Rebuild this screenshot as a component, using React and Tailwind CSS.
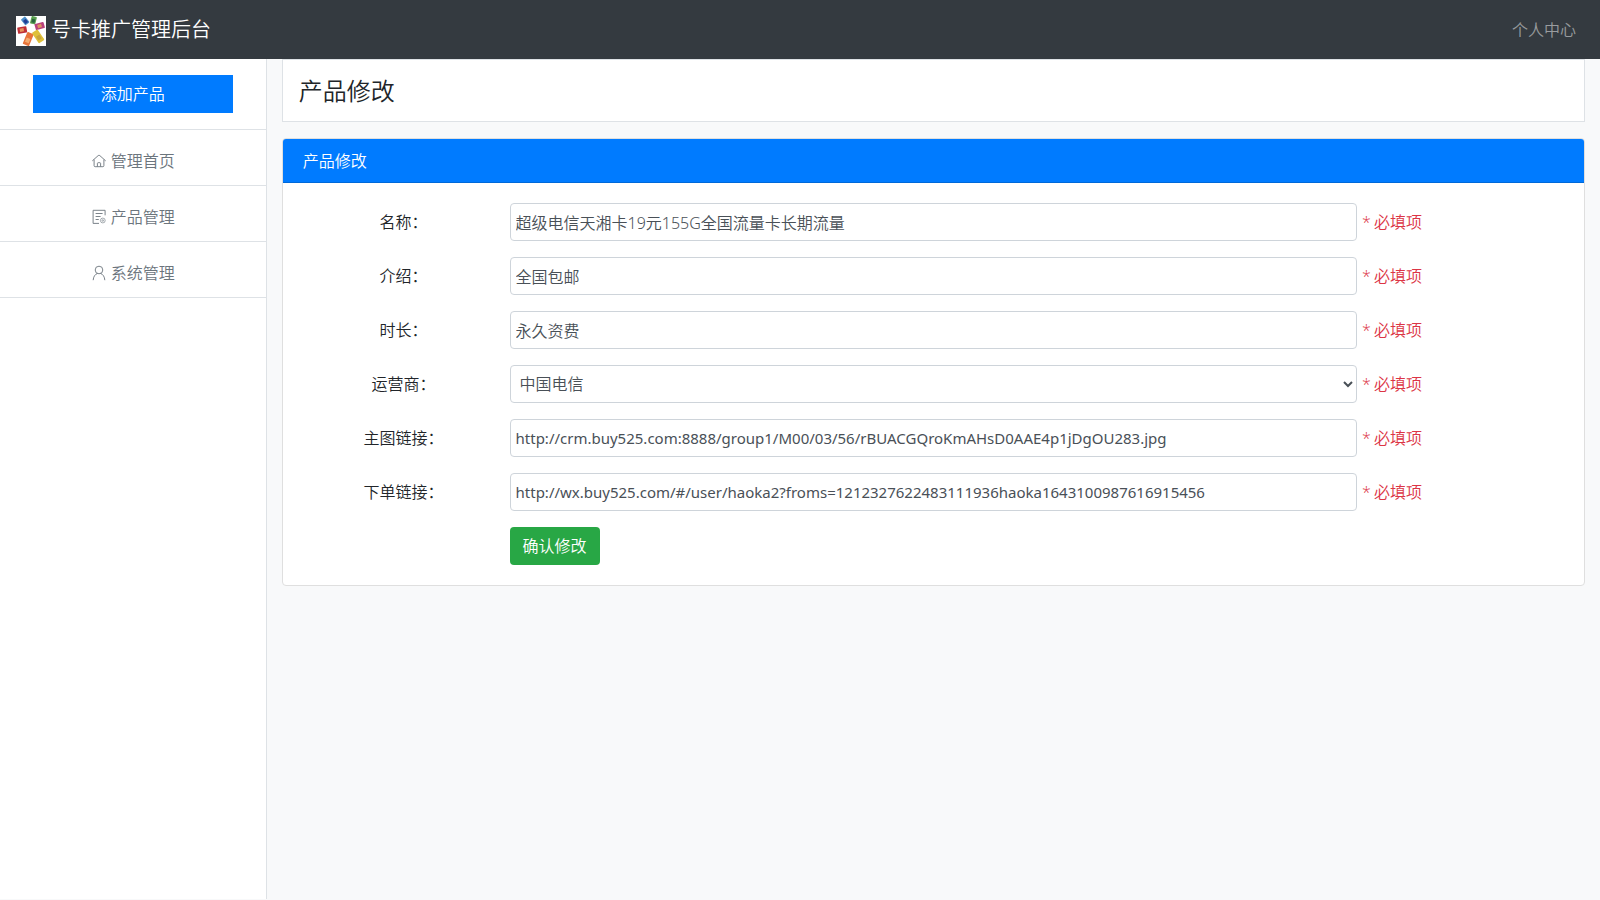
function Logo() {
  return (
    <svg className="size-[30px] bg-white" viewBox="0 0 30 30" aria-hidden="true">
      <g transform="rotate(-38 9.5 5)"><rect x="6.6" y="1" width="5.4" height="7.4" rx="0.8" fill="#4c8fc8" /><rect x="7.6" y="3.4" width="3.4" height="4" fill="#233f96" /></g>
      <g transform="rotate(14 17.5 4)"><rect x="14.8" y="0.4" width="5.4" height="7.6" rx="0.8" fill="#5aa050" /><rect x="15.9" y="3" width="3.2" height="3.6" fill="#2c6440" /></g>
      <g transform="rotate(-16 24 10)"><rect x="19" y="6.8" width="9.4" height="6.2" rx="0.8" fill="#b8407c" /><rect x="21.6" y="8.2" width="4" height="3.4" fill="#dd9360" /></g>
      <g transform="rotate(-10 6 14)"><rect x="1.6" y="10.8" width="9.2" height="6.4" rx="0.8" fill="#bf3038" /><rect x="3.8" y="12.3" width="4" height="3.4" fill="#e6925a" /></g>
      <g transform="rotate(22 12 23)"><rect x="8.8" y="16.4" width="6.8" height="13" rx="0.8" fill="#e8743a" /><rect x="10.2" y="22" width="4" height="4.6" fill="#f3ac70" /></g>
      <g transform="rotate(-34 22 20.5)"><rect x="18.8" y="14.2" width="6.8" height="12.6" rx="0.8" fill="#dfc03a" /><rect x="20.2" y="19.6" width="4" height="4.4" fill="#c9a63a" /></g>
    </svg>
  );
}

function Icon({ children }) {
  return (
    <svg className="size-4" viewBox="0 0 16 16" fill="none" stroke="currentColor" strokeWidth="0.9" aria-hidden="true">
      {children}
    </svg>
  );
}

const menu = [
  {
    label: "管理首页",
    icon: (
      <Icon>
        <path d="M1.6 7.6 7.2 2.6a1.2 1.2 0 0 1 1.6 0l5.6 5" strokeLinecap="round" />
        <path d="M3.1 6.6v6.1c0 .6.4 1 1 1h7.8c.6 0 1-.4 1-1V6.6" />
        <path d="M6.4 13.5v-3.1c0-.4.3-.7.7-.7h1.8c.4 0 .7.3.7.7v3.1" />
      </Icon>
    ),
  },
  {
    label: "产品管理",
    icon: (
      <Icon>
        <path d="M8 14.4H2.1V1.3h12v5" />
        <path d="M4.6 4.5h7M4.6 7.5h5M4.6 10.5h3.2" />
        <circle cx="11.8" cy="11.5" r="2.4" strokeWidth="0.6" />
        <circle cx="11.8" cy="11.5" r="0.8" strokeWidth="0.6" />
      </Icon>
    ),
  },
  {
    label: "系统管理",
    icon: (
      <Icon>
        <circle cx="8" cy="5" r="3.8" />
        <path d="M2.2 14.8c.2-3.1 1.7-5.4 4-6.3M13.8 14.8c-.2-3.1-1.7-5.4-4-6.3" strokeLinecap="round" />
      </Icon>
    ),
  },
];

const fields = [
  { id: "name", label: "名称：", value: "超级电信天湘卡19元155G全国流量卡长期流量" },
  { id: "intro", label: "介绍：", value: "全国包邮" },
  { id: "duration", label: "时长：", value: "永久资费" },
  { id: "operator", label: "运营商：", options: ["中国电信", "中国移动", "中国联通"] },
  { id: "image", label: "主图链接：", value: "http://crm.buy525.com:8888/group1/M00/03/56/rBUACGQroKmAHsD0AAE4p1jDgOU283.jpg", url: true },
  { id: "order", label: "下单链接：", value: "http://wx.buy525.com/#/user/haoka2?froms=1212327622483111936haoka1643100987616915456", url: true },
];

const control =
  "h-[38px] w-full rounded border border-[#ced4da] bg-white px-[5px] font-['Noto_Sans','Noto_Sans_CJK_SC',sans-serif] text-[#495057]";

function Field({ field }) {
  return (
    <div className="grid grid-cols-12 items-center">
      <label htmlFor={field.id} className="col-span-2 text-center">
        {field.label}
      </label>
      <div className="col-span-8">
        {field.options ? (
          <select id={field.id} className={control}>
            {field.options.map((o) => (
              <option key={o}>{o}</option>
            ))}
          </select>
        ) : (
          <input
            id={field.id}
            type="text"
            defaultValue={field.value}
            className={field.url ? control + " text-[15px] font-normal" : control}
          />
        )}
      </div>
      <span className="col-span-2 flex gap-[3px] px-[5px] text-[#dc3545]">
        <span>*</span>
        <span>必填项</span>
      </span>
    </div>
  );
}

export default function App() {
  return (
    <div className="flex min-h-screen flex-col bg-[#f8f9fa] pb-px font-['Open_Sans','Noto_Sans_CJK_SC',sans-serif] text-base font-[350] text-[#212529]">
      <header className="flex h-[59px] items-center justify-between bg-[#343a40] pr-6 pl-4">
        <a href="#home" className="flex items-start gap-[5px] pt-[2px] text-xl text-white">
          <Logo />
          <span>号卡推广管理后台</span>
        </a>
        <a href="#profile" className="text-white/50">
          个人中心
        </a>
      </header>
      <div className="grid flex-1 grid-cols-12">
        <aside className="col-span-2 border-r border-[#dee2e6] bg-white">
          <div className="flex justify-center border-b border-[#dee2e6] py-4">
            <button type="button" className="h-[38px] w-[200px] bg-[#007bff] text-white">
              添加产品
            </button>
          </div>
          <nav>
            {menu.map((m) => (
              <a
                key={m.label}
                href="#menu"
                className="flex h-14 items-center justify-center gap-1 border-b border-[#dee2e6] pt-[6px] text-[#6c757d]"
              >
                {m.icon}
                {m.label}
              </a>
            ))}
          </nav>
        </aside>
        <main className="col-span-10 px-[15px]">
          <h1 className="mb-4 border border-[#dee2e6] bg-white px-4 py-3 text-2xl leading-[37px]">产品修改</h1>
          <section className="overflow-hidden rounded border border-[#dfdfdf] bg-white">
            <h2 className="border-b border-[#0069d9] bg-[#007bff] px-5 pt-[10px] pb-[9px] text-white">产品修改</h2>
            <form className="flex flex-col gap-4 px-[15px] py-5" onSubmit={(e) => e.preventDefault()}>
              {fields.map((f) => (
                <Field key={f.id} field={f} />
              ))}
              <div className="grid grid-cols-12">
                <div className="col-span-8 col-start-3">
                  <button type="submit" className="h-[38px] rounded bg-[#28a745] px-[13px] text-white">
                    确认修改
                  </button>
                </div>
              </div>
            </form>
          </section>
        </main>
      </div>
    </div>
  );
}
